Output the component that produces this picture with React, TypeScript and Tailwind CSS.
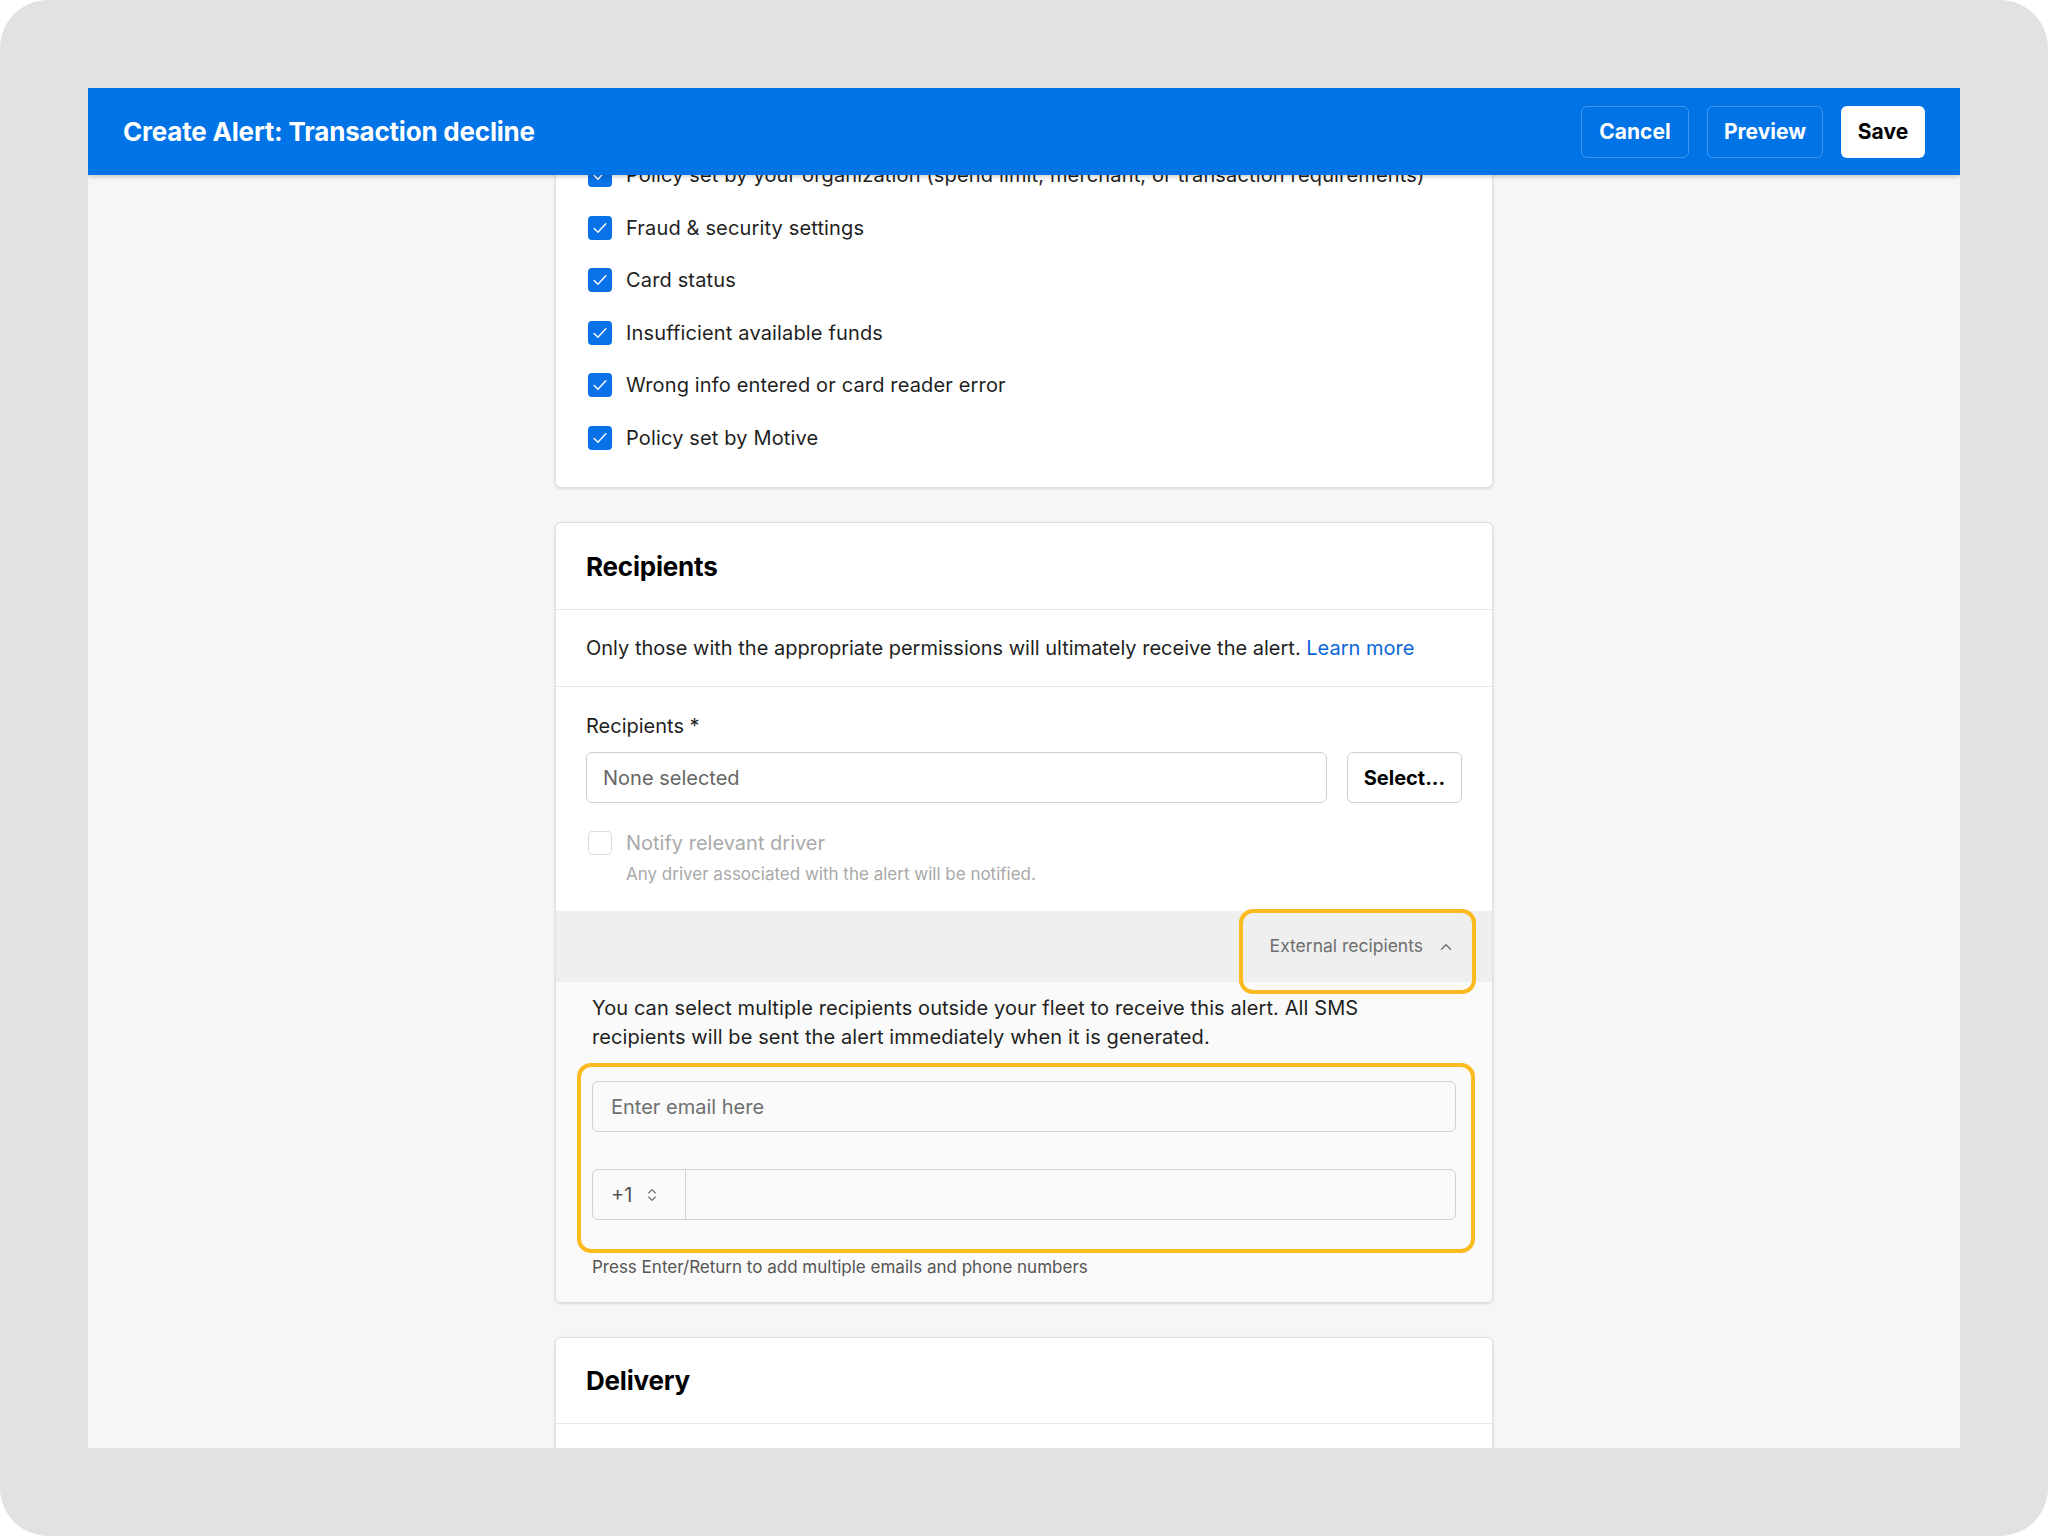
import React from 'react';
import { ChevronUp, ChevronsUpDown } from 'lucide-react';

const declineReasons = [
  'Policy set by your organization (spend limit, merchant, or transaction requirements)',
  'Fraud & security settings',
  'Card status',
  'Insufficient available funds',
  'Wrong info entered or card reader error',
  'Policy set by Motive',
];

const CheckBox: React.FC<{ checked?: boolean }> = ({ checked }) =>
  checked ? (
    <span className="flex h-[24px] w-[24px] shrink-0 items-center justify-center rounded-[4px] bg-[#0a72e8]">
      <svg width="20" height="20" viewBox="0 0 24 24" fill="none">
        <path d="M5 12.5l4.5 4.5L19 7" stroke="white" strokeWidth="1.7" strokeLinecap="round" strokeLinejoin="round" />
      </svg>
    </span>
  ) : (
    <span className="h-[24px] w-[24px] shrink-0 rounded-[4px] border border-[#dcdcdc] bg-white" />
  );

const Card: React.FC<{ className?: string; children: React.ReactNode }> = ({ className = '', children }) => (
  <div className={`overflow-hidden rounded-[6px] border border-[#dedede] bg-white shadow-[0_1px_3px_rgba(0,0,0,0.12)] ${className}`}>
    {children}
  </div>
);

const App: React.FC = () => {
  return (
    <div className="h-[1536px] w-[2048px] bg-white font-['Inter','Liberation_Sans',sans-serif] text-[#1f1f1f]">
      <div className="h-full w-full rounded-[48px] bg-[#e2e2e2] p-[88px]">
        <div className="flex h-[1360px] w-[1872px] flex-col overflow-hidden bg-[#f6f6f6]">
          {/* top bar */}
          <div className="relative z-10 flex h-[87px] shrink-0 items-center justify-between bg-[#0073e6] px-[35px] shadow-[0_2px_4px_rgba(0,0,0,0.18)]">
            <h1 className="text-[26px] font-bold tracking-[-0.2px] text-white">Create Alert: Transaction decline</h1>
            <div className="flex items-center gap-[18px]">
              <button className="h-[52px] w-[108px] rounded-[6px] border border-white/25 text-[21px] font-bold text-white">Cancel</button>
              <button className="h-[52px] w-[116px] rounded-[6px] border border-white/25 text-[21px] font-bold text-white">Preview</button>
              <button className="h-[52px] w-[84px] rounded-[6px] bg-white text-[21px] font-bold text-black">Save</button>
            </div>
          </div>

          {/* scrolled content */}
          <div className="flex-1 overflow-hidden">
            <div className="mx-auto flex w-[938px] flex-col gap-[34px]">
              <Card className="-mt-[27px] pb-[23px]">
                {declineReasons.map((reason) => (
                  <div key={reason} className="flex h-[52.5px] items-center gap-[14px] px-[32px]">
                    <CheckBox checked />
                    <span className="text-[20px] tracking-[0.15px]">{reason}</span>
                  </div>
                ))}
              </Card>

              <Card>
                <div className="flex h-[87px] items-center border-b border-[#e6e6e6] px-[30px]">
                  <h2 className="text-[26px] font-bold tracking-[-0.2px] text-black">Recipients</h2>
                </div>
                <div className="flex h-[77px] items-center border-b border-[#e6e6e6] px-[30px] text-[20px]">
                  <p>
                    Only those with the appropriate permissions will ultimately receive the alert.{' '}
                    <a className="text-[#0a66d6]">Learn more</a>
                  </p>
                </div>
                <div className="px-[30px] pb-[25px] pt-[25px]">
                  <div className="text-[20px] leading-[28px]">Recipients *</div>
                  <div className="mt-[12px] flex gap-[20px]">
                    <div className="flex h-[51px] flex-1 items-center rounded-[6px] border border-[#cfcfcf] px-[16px] text-[20px] text-[#666]">
                      None selected
                    </div>
                    <button className="h-[51px] w-[115px] rounded-[6px] border border-[#cfcfcf] text-[20px] font-bold text-black">Select...</button>
                  </div>
                  <div className="mt-[26px] flex items-center gap-[14px] pl-[2px]">
                    <CheckBox />
                    <span className="text-[20px] leading-[28px] text-[#aaaaaa]">Notify relevant driver</span>
                  </div>
                  <div className="mt-[5px] pl-[40px] text-[17px] leading-[24px] text-[#a8a8a8]">
                    Any driver associated with the alert will be notified.
                  </div>
                </div>

                <div className="relative flex h-[71px] items-center justify-end bg-[#efefef] pr-[37px]">
                  <div className="flex items-center gap-[14px] text-[17.5px] text-[#6e6e6e]">
                    <span>External recipients</span>
                    <ChevronUp size={18} strokeWidth={1.8} />
                  </div>
                  <div className="absolute -top-[2px] right-[16px] h-[85px] w-[237px] rounded-[14px] border-[4px] border-[#fbba1f]" />
                </div>

                <div className="bg-[#fafafa] px-[36px] pb-[23px] pt-[12px]">
                  <p className="text-[20px] leading-[29px] tracking-[0.1px]">
                    You can select multiple recipients outside your fleet to receive this alert. All SMS
                    <br />
                    recipients will be sent the alert immediately when it is generated.
                  </p>
                  <div className="relative mt-[29px]">
                    <div className="flex h-[51px] items-center rounded-[6px] border border-[#d2d2d2] bg-[#fafafa] px-[18px] text-[20px] text-[#6f6f6f]">
                      Enter email here
                    </div>
                    <div className="mt-[37px] flex h-[51px] rounded-[6px] border border-[#d2d2d2] bg-[#fafafa]">
                      <div className="flex w-[93px] items-center gap-[12px] border-r border-[#d2d2d2] pl-[18px] text-[20px] text-[#555]">
                        <span>+1</span>
                        <ChevronsUpDown size={16} strokeWidth={1.6} className="text-[#666]" />
                      </div>
                      <div className="flex-1" />
                    </div>
                    <div className="absolute -bottom-[33px] -left-[15px] -right-[19px] -top-[18px] rounded-[14px] border-[4px] border-[#fbba1f]" />
                  </div>
                  <div className="mt-[35px] text-[17px] leading-[24px] text-[#555]">
                    Press Enter/Return to add multiple emails and phone numbers
                  </div>
                </div>
              </Card>

              <Card>
                <div className="flex h-[86px] items-center border-b border-[#e6e6e6] px-[30px]">
                  <h2 className="text-[26px] font-bold tracking-[-0.2px] text-black">Delivery</h2>
                </div>
                <div className="h-[200px]" />
              </Card>
            </div>
          </div>
        </div>
      </div>
    </div>
  );
};

export default App;
